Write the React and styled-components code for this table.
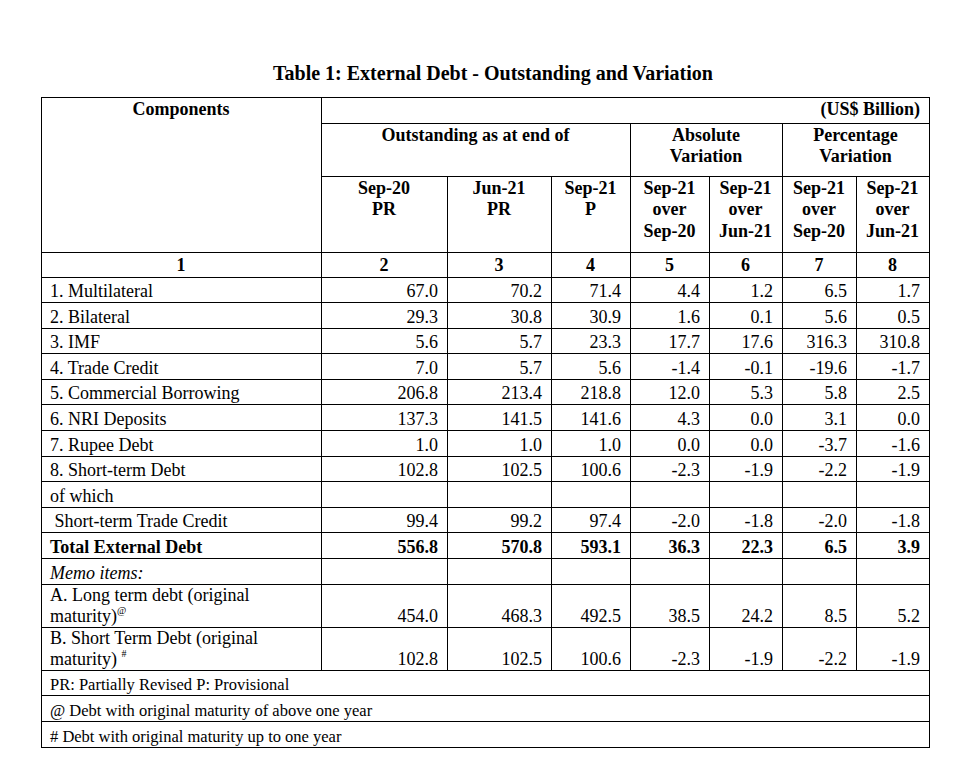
import React from 'react';
import styled, { createGlobalStyle } from 'styled-components';

const GlobalStyle = createGlobalStyle`
  body {
    margin: 0;
    background: #fff;
    color: #000;
    font-family: "Liberation Serif", "Times New Roman", serif;
  }
`;

const Page = styled.div`
  padding: 62px 0 30px 41px;
`;

const Title = styled.h1`
  box-sizing: border-box;
  width: 888px;
  margin: 0 0 12.5px;
  padding-left: 16px;
  font-size: 20px;
  line-height: 22px;
  font-weight: bold;
  text-align: center;
`;

const Table = styled.table`
  width: 888px;
  border-collapse: collapse;
  table-layout: fixed;
`;

const Row = styled.tr`
  height: ${(p) => p.$h || 25.6}px;
`;

const HeadCell = styled.th`
  border: 1px solid #000;
  padding: 1px 9px 0 8px;
  font-size: 18px;
  line-height: 21.5px;
  font-weight: bold;
  vertical-align: ${(p) => p.$valign || 'top'};
  text-align: ${(p) => p.$align || 'center'};
`;

const Cell = styled.td`
  border: 1px solid #000;
  padding: 0 9px 0 8px;
  font-size: ${(p) => (p.$small ? 16.5 : 18)}px;
  line-height: 21px;
  vertical-align: bottom;
  text-align: ${(p) => p.$align || 'left'};
  font-weight: ${(p) => (p.$bold ? 'bold' : 'normal')};
  font-style: ${(p) => (p.$italic ? 'italic' : 'normal')};
  white-space: nowrap;
`;

const Sup = styled.sup`
  font-size: 10px;
  line-height: 0;
  vertical-align: 8px;
`;

const colWidths = [280, 126, 104, 79, 79, 73, 74, 73];

const dateHeads = [
  ['Sep-20', 'PR'],
  ['Jun-21', 'PR'],
  ['Sep-21', 'P'],
  ['Sep-21', 'over', 'Sep-20'],
  ['Sep-21', 'over', 'Jun-21'],
  ['Sep-21', 'over', 'Sep-20'],
  ['Sep-21', 'over', 'Jun-21'],
];

const rows = [
  { label: '1. Multilateral', v: ['67.0', '70.2', '71.4', '4.4', '1.2', '6.5', '1.7'] },
  { label: '2. Bilateral', v: ['29.3', '30.8', '30.9', '1.6', '0.1', '5.6', '0.5'] },
  { label: '3. IMF', v: ['5.6', '5.7', '23.3', '17.7', '17.6', '316.3', '310.8'] },
  { label: '4. Trade Credit', v: ['7.0', '5.7', '5.6', '-1.4', '-0.1', '-19.6', '-1.7'] },
  { label: '5. Commercial Borrowing', v: ['206.8', '213.4', '218.8', '12.0', '5.3', '5.8', '2.5'] },
  { label: '6. NRI Deposits', v: ['137.3', '141.5', '141.6', '4.3', '0.0', '3.1', '0.0'] },
  { label: '7. Rupee Debt', v: ['1.0', '1.0', '1.0', '0.0', '0.0', '-3.7', '-1.6'] },
  { label: '8. Short-term Debt', v: ['102.8', '102.5', '100.6', '-2.3', '-1.9', '-2.2', '-1.9'] },
  { label: 'of which', v: ['', '', '', '', '', '', ''] },
  { label: '\u00a0Short-term Trade Credit', v: ['99.4', '99.2', '97.4', '-2.0', '-1.8', '-2.0', '-1.8'] },
  { label: 'Total External Debt', v: ['556.8', '570.8', '593.1', '36.3', '22.3', '6.5', '3.9'], bold: true },
  { label: 'Memo items:', v: ['', '', '', '', '', '', ''], italic: true },
  {
    label: <>A. Long term debt (original<br />maturity)<Sup>@</Sup></>,
    v: ['454.0', '468.3', '492.5', '38.5', '24.2', '8.5', '5.2'],
    h: 42.8,
  },
  {
    label: <>B. Short Term Debt (original<br />maturity) <Sup>#</Sup></>,
    v: ['102.8', '102.5', '100.6', '-2.3', '-1.9', '-2.2', '-1.9'],
    h: 43.2,
  },
];

const notes = [
  'PR: Partially Revised P: Provisional',
  '@ Debt with original maturity of above one year',
  '# Debt with original maturity up to one year',
];

export default function App() {
  return (
    <Page>
      <GlobalStyle />
      <Title>Table 1: External Debt - Outstanding and Variation</Title>
      <Table>
        <colgroup>
          {colWidths.map((w, i) => <col key={i} style={{ width: w }} />)}
        </colgroup>
        <thead>
          <Row $h={26}>
            <HeadCell rowSpan={3}>Components</HeadCell>
            <HeadCell colSpan={7} $align="right">(US$ Billion)</HeadCell>
          </Row>
          <Row $h={53}>
            <HeadCell colSpan={3}>Outstanding as at end of</HeadCell>
            <HeadCell colSpan={2}>Absolute<br />Variation</HeadCell>
            <HeadCell colSpan={2}>Percentage<br />Variation</HeadCell>
          </Row>
          <Row $h={76}>
            {dateHeads.map((lines, i) => (
              <HeadCell key={i}>
                {lines.map((l, j) => <div key={j}>{l}</div>)}
              </HeadCell>
            ))}
          </Row>
          <Row $h={25}>
            {[1, 2, 3, 4, 5, 6, 7, 8].map((n) => <HeadCell key={n} $valign="bottom">{n}</HeadCell>)}
          </Row>
        </thead>
        <tbody>
          {rows.map((r, i) => (
            <Row key={i} $h={r.h}>
              <Cell $bold={r.bold} $italic={r.italic}>{r.label}</Cell>
              {r.v.map((x, j) => (
                <Cell key={j} $align="right" $bold={r.bold}>{x}</Cell>
              ))}
            </Row>
          ))}
          {notes.map((n, i) => (
            <Row key={'n' + i}>
              <Cell colSpan={8} $small>{n}</Cell>
            </Row>
          ))}
        </tbody>
      </Table>
    </Page>
  );
}
